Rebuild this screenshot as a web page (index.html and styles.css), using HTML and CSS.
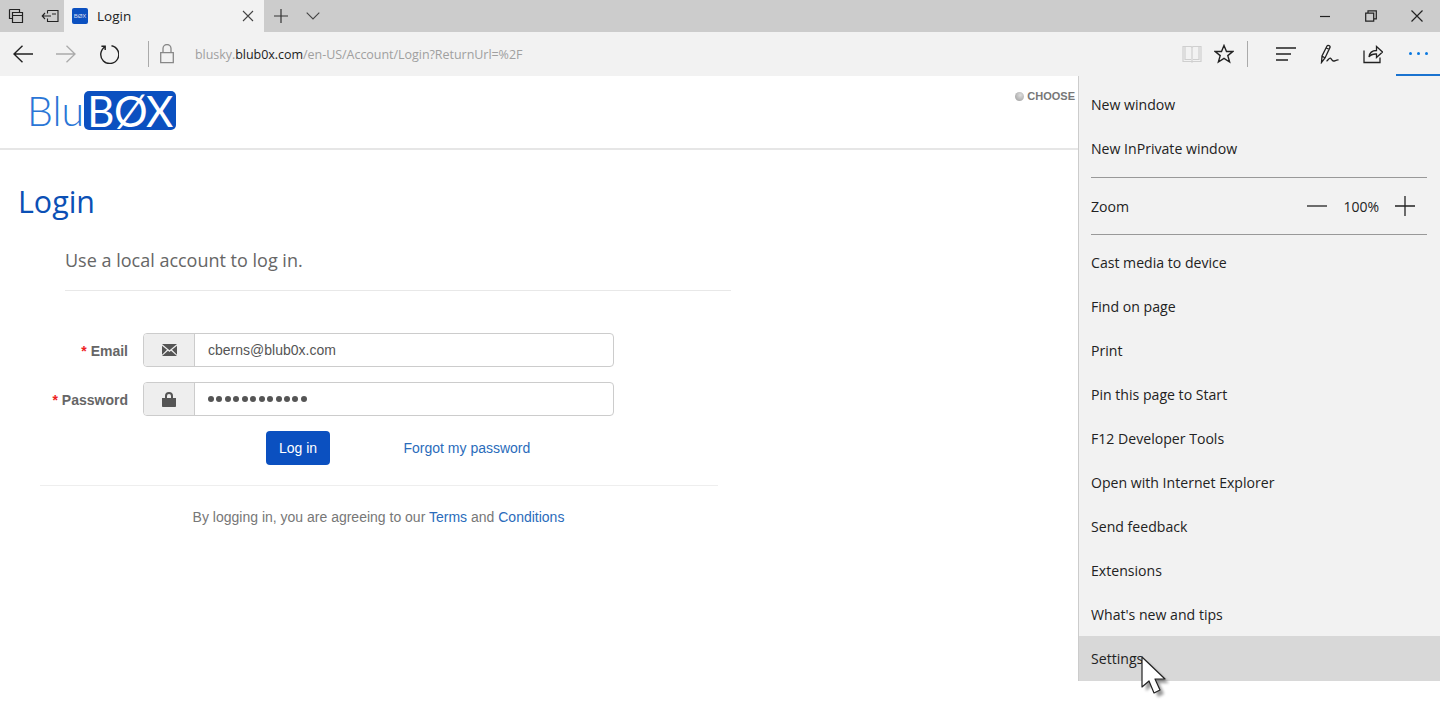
FILE: index.html
```html
<!DOCTYPE html>
<html lang="en">
<head>
<meta charset="utf-8">
<title>Login</title>
<link rel="stylesheet" href="styles.css">
</head>
<body>
<div class="tabbar">
  <div class="tab-tools">
    <svg width="16" height="16" viewBox="0 0 16 16"><path d="M1.500 1.500h10v3M1.500 1.500v9h3M4.500 4.500h10v10h-10zM4.500 7.500h10" fill="none" stroke="#222" stroke-width="1.200"/></svg>
    <svg width="18" height="14" viewBox="0 0 18 14"><path d="M6.500 1.500h10.500v11H6.500v-3M6.500 4.500v-3M10 7H1M4 4 1.200 7 4 10M11 5h4" fill="none" stroke="#222" stroke-width="1.100"/></svg>
  </div>
  <div class="tab">
    <span class="favicon">BØX</span>
    <span class="tab-title">Login</span>
    <svg width="12" height="12" viewBox="0 0 12 12"><path d="M1 1l10 10M11 1 1 11" stroke="#444" stroke-width="1.100"/></svg>
  </div>
  <div class="tab-actions">
    <svg width="14" height="14" viewBox="0 0 14 14"><path d="M7 0v14M0 7h14" stroke="#333" stroke-width="1.200"/></svg>
    <svg width="14" height="8" viewBox="0 0 14 8"><path d="M.7.700 7 7 13.300.7" fill="none" stroke="#444" stroke-width="1.100"/></svg>
  </div>
  <div class="win-controls">
    <svg width="12" height="12" viewBox="0 0 12 12"><path d="M1 6.500h10" stroke="#222" stroke-width="1.200"/></svg>
    <svg width="12" height="12" viewBox="0 0 12 12"><path d="M.7 3.200h8v8h-8zM3 3V.8h8.300v8H9" fill="none" stroke="#222" stroke-width="1.200"/></svg>
    <svg width="12" height="12" viewBox="0 0 12 12"><path d="M.5.500l11 11M11.500.5l-11 11" stroke="#222" stroke-width="1.200"/></svg>
  </div>
</div>

<div class="toolbar">
  <div class="nav-btns">
    <svg width="20" height="18" viewBox="0 0 20 18"><path d="M20 9H1M9.500.8 1 9l8.500 8.200" fill="none" stroke="#222" stroke-width="1.400"/></svg>
    <svg width="20" height="18" viewBox="0 0 20 18"><path d="M0 9h19M10.500.8 19 9l-8.500 8.200" fill="none" stroke="#aaa" stroke-width="1.300"/></svg>
    <svg width="20" height="20" viewBox="0 0 20 20"><path d="M6.500 2.600A9 9 0 1 0 12.500 1.700M6.200 6V2.300h-3.800" fill="none" stroke="#222" stroke-width="1.400"/></svg>
  </div>
  <span class="tb-sep"></span>
  <svg class="lock" width="14" height="20" viewBox="0 0 14 20"><path d="M.7 8.700h12.600v10H.7zM3 8.500V4.500a4 4 0 0 1 8 0v4" fill="none" stroke="#888" stroke-width="1.300"/></svg>
  <div class="address">blusky.<b>blub0x.com</b>/en-US/Account/Login?ReturnUrl=%2F</div>
  <div class="tb-right">
    <svg class="ic-book" width="20" height="18" viewBox="0 0 20 18"><path d="M1 1.500h8l1 1 1-1h8v15h-8l-1 .5-1-.5H1zM10 2.500v14.500M3 1.500v13h6M17 1.500v13h-6" fill="none" stroke="#cfcfcf" stroke-width="1.200"/></svg>
    <svg class="ic-star" width="20" height="20" viewBox="0 0 20 20"><path d="M10 1.500l2.500 6h6.300l-5 4.100 1.800 6.400-5.600-3.700L4.400 18l1.800-6.400-5-4.100h6.300z" fill="none" stroke="#222" stroke-width="1.400"/></svg>
    <span class="tb-sep"></span>
    <svg class="ic-hub" width="20" height="14" viewBox="0 0 20 14"><path d="M0 1h20M0 7h15M0 13h12" stroke="#222" stroke-width="1.300"/></svg>
    <svg class="ic-note" width="20" height="20" viewBox="0 0 20 20"><path d="M1.500 18.500l.5-6.500L7 2c.8-1.400 3.600-.2 3 1.400L5 14zM2 12l3 2M6.300 4l3 1.500M6.500 17c1.500-.3 2.500-3.500 4-2.800 1.300.8 1.500 3 3 2.800 1.500 0 3-1.300 5-1" fill="none" stroke="#222" stroke-width="1.300"/></svg>
    <svg class="ic-share" width="20" height="20" viewBox="0 0 20 20"><path d="M1 6.500v12h16v-5M6 13c.5-4 3-6.500 7.500-6.500V2.500l6 5.500-6 5.500V10c-3.500-.2-6 .8-7.500 3z" fill="none" stroke="#222" stroke-width="1.300"/></svg>
    <div class="more"><i></i><i></i><i></i></div>
  </div>
</div>

<div class="page">
  <header class="site-header">
    <div class="logo"><span class="logo-blu">Blu</span><span class="logo-box">BØX</span></div>
    <div class="lang"><span class="globe"></span>CHOOSE</div>
  </header>
  <main class="content">
    <h1>Login</h1>
    <section class="form-wrap">
      <h2>Use a local account to log in.</h2>
      <div class="form">
        <div class="row">
          <label class="lbl"><span class="req">*</span> Email</label>
          <div class="group">
            <span class="addon">
              <svg width="15" height="12" viewBox="0 0 15 12"><path d="M0 0h15L7.500 6.200zM0 1.800v9L5 5.800zM15 1.800v9l-5-5zM0 12h15L9 6.700 7.500 8 6 6.700z" fill="#555"/></svg>
            </span>
            <span class="value">cberns@blub0x.com</span>
          </div>
        </div>
        <div class="row">
          <label class="lbl"><span class="req">*</span> Password</label>
          <div class="group">
            <span class="addon">
              <svg width="14" height="15" viewBox="0 0 14 15"><path d="M0 6h14v8.200a.8.8 0 0 1-.8.800H.8a.8.8 0 0 1-.8-.8zM3 6V4a4 4 0 0 1 8 0v2H9V4a2 2 0 0 0-4 0v2z" fill="#555"/></svg>
            </span>
            <span class="value dots"><i></i><i></i><i></i><i></i><i></i><i></i><i></i><i></i><i></i><i></i><i></i><i></i></span>
          </div>
        </div>
        <div class="actions">
          <button class="btn" type="button">Log in</button>
          <a class="link" href="#">Forgot my password</a>
        </div>
      </div>
    </section>
    <p class="terms">By logging in, you are agreeing to our <a class="link" href="#">Terms</a> and <a class="link" href="#">Conditions</a></p>
  </main>

  <nav class="menu">
    <div class="item">New window</div>
    <div class="item">New InPrivate window</div>
    <div class="rule rule-a"></div>
    <div class="item zoom">
      <span>Zoom</span>
      <span class="zoom-ctl">
        <svg width="20" height="20" viewBox="0 0 20 20"><path d="M0 10h20" stroke="#222" stroke-width="1.300"/></svg>
        <span class="pct">100%</span>
        <svg width="20" height="20" viewBox="0 0 20 20"><path d="M0 10h20M10 0v20" stroke="#222" stroke-width="1.300"/></svg>
      </span>
    </div>
    <div class="rule rule-b"></div>
    <div class="item">Cast media to device</div>
    <div class="item">Find on page</div>
    <div class="item">Print</div>
    <div class="item">Pin this page to Start</div>
    <div class="item">F12 Developer Tools</div>
    <div class="item">Open with Internet Explorer</div>
    <div class="item">Send feedback</div>
    <div class="item">Extensions</div>
    <div class="item">What's new and tips</div>
    <div class="item active">Settings</div>
  </nav>

  <svg class="cursor" width="30" height="46" viewBox="0 0 30 46">
    <defs><filter id="sh" x="-30%" y="-30%" width="170%" height="170%"><feGaussianBlur stdDeviation="1.500"/></filter></defs>
    <path d="M4 3v30l7-6 5 12 6-3-5-11h10z" fill="#000" opacity=".4" filter="url(#sh)" transform="translate(2 2)"/>
    <path d="M2 1v30l7-6 5 12 6-3-5-11h10z" fill="#fff" stroke="#222" stroke-width="1.200" stroke-linejoin="round"/>
  </svg>
</div>
</body>
</html>
```
FILE: styles.css
```css
* { box-sizing: border-box; }
html, body { margin: 0; height: 100%; overflow: hidden; background: #fff; }
body { font-family: "Liberation Sans", Arial, sans-serif; color: #666; }

.tabbar { height: 32px; background: #ccc; display: flex; align-items: stretch; }
.tab-tools { width: 64px; display: flex; align-items: center; gap: 17px; padding-left: 8px; }
.tab { width: 200px; background: #f2f2f2; display: flex; align-items: center; padding: 0 10px 0 8px; }
.favicon { width: 16px; height: 16px; border-radius: 2px; background: #0b50c0; color: #dde; font-size: 6px; line-height: 16px; text-align: center; font-family: "Liberation Sans", sans-serif; }
.tab-title { flex: 1; margin-left: 9px; font: 13.5px "Open Sans", sans-serif; color: #222; }
.tab-actions { display: flex; align-items: center; gap: 18px; padding-left: 10px; }
.win-controls { margin-left: auto; display: flex; align-items: center; gap: 34px; padding-right: 17px; }

.toolbar { height: 44px; background: #f2f2f2; display: flex; align-items: center; padding-left: 13px; position: relative; }
.nav-btns { display: flex; align-items: center; gap: 23px; width: 135px; }
.tb-sep { width: 1px; height: 26px; background: #aaa; display: block; flex: none; }
.lock { margin-left: 11px; }
.address { margin-left: 21px; font: 12.5px "Open Sans", sans-serif; color: #a0a0a0; letter-spacing: -.04px; }
.address b { font-weight: 400; color: #222; }
.tb-right { margin-left: auto; display: flex; align-items: center; height: 100%; }
.ic-book { margin-right: 13px; margin-left: -1px; }
.ic-star { margin-right: 13px; margin-left: -1px; }
.ic-hub { margin-left: 28px; }
.ic-note { margin-left: 24px; }
.ic-share { margin-left: 23px; }
.more { width: 44px; height: 100%; margin-left: 13px; display: flex; align-items: center; justify-content: center; gap: 5px; border-bottom: 2px solid #1a73d0; }
.more i { width: 3px; height: 3px; background: #0a78e0; border-radius: 50%; }

.page { position: relative; height: 649px; }
.site-header { height: 74px; border-bottom: 2px solid #e6e6e6; display: flex; justify-content: space-between; padding: 15px 0 0 27px; }
.logo { display: flex; align-items: flex-start; }
.logo-blu { font: 300 41px/40px Lato, sans-serif; color: #2a76d6; letter-spacing: 0; width: 57px; }
.logo-box { width: 92px; height: 39px; border-radius: 5px; background: #0b50c0; color: #fff; font: 400 42px/40px Lato, sans-serif; text-align: center; letter-spacing: -.5px; }
.lang { margin: -2px 365px 0 0; font-size: 11px; font-weight: 700; color: #777; height: 14px; line-height: 14px; display: flex; align-items: center; gap: 3px; }
.globe { width: 9px; height: 9px; border-radius: 50%; background: radial-gradient(circle at 60% 35%, #ddd, #999); }

.content { padding: 0 0 0 19px; width: 760px; }
h1 { margin: 31px 0 0 -1px; font: 400 30.400px/42px "Open Sans", sans-serif; color: #0b50b5; }
.form-wrap { margin-left: 46px; width: 666px; }
h2 { margin: 25px 0 0; padding-bottom: 18px; font: 400 18px/24px "Open Sans", sans-serif; color: #666; border-bottom: 1px solid #e8e8e8; }
.form { margin: 42px 0 0 -46px; }
.row { display: flex; align-items: center; height: 34px; margin-bottom: 15px; }
.lbl { width: 109px; text-align: right; font-size: 14px; font-weight: 700; color: #666; padding-top: 2px; }
.req { color: #e22; }
.group { margin-left: 15px; width: 471px; height: 34px; display: flex; border: 1px solid #ccc; border-radius: 4px; background: #fff; overflow: hidden; }
.addon { width: 51px; background: #eee; border-right: 1px solid #ccc; display: flex; align-items: center; justify-content: center; }
.value { padding-left: 13px; font-size: 14px; line-height: 32px; color: #555; }
.dots { display: flex; align-items: center; gap: 2.450px; }
.dots i { width: 6px; height: 6px; border-radius: 50%; background: #555; }
.actions { display: flex; align-items: center; margin-left: 247px; }
.btn { width: 64px; height: 34px; border: 0; border-radius: 4px; background: #0b50c0; color: #fff; font: 14px "Liberation Sans", sans-serif; padding: 0; }
.link { color: #2a6cbb; text-decoration: none; font-size: 14px; }
.actions .link { margin-left: 73.500px; }
.terms { margin: 20px 0 0 21px; width: 678px; padding: 21px 1px 0 0; border-top: 1px solid #eee; text-align: center; font-size: 14px; line-height: 20px; color: #777; }

.menu { position: absolute; top: 0; right: 0; width: 362px; background: #f2f2f2; border-left: 1px solid #ccc; padding-top: 6px; font: 14.100px "Open Sans", sans-serif; color: #222; }
.item { height: 44px; padding-left: 12px; display: flex; align-items: center; }
.rule { height: 1px; background: #999; margin-left: 12px; margin-right: 13px; }
.rule-a { margin-top: 7px; margin-bottom: 6px; }
.rule-b { margin-top: 6px; margin-bottom: 5px; }
.zoom { justify-content: space-between; padding-right: 25px; }
.zoom-ctl { display: flex; align-items: center; gap: 16px; }
.pct { font-size: 14px; }
.active { background: #d8d8d8; height: 45px; }
.cursor { position: absolute; top: 580px; left: 1140px; }
```
